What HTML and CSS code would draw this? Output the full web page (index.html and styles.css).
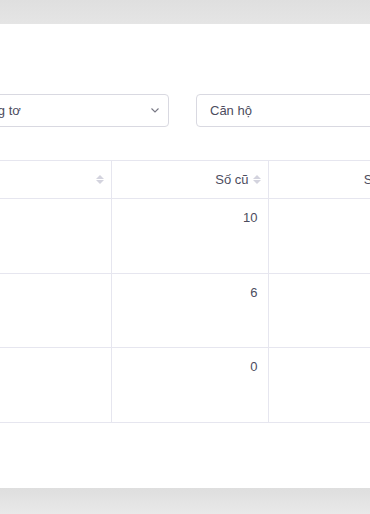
FILE: index.html
```html
<!DOCTYPE html>
<html>
<head>
    <meta charset="UTF-8">
    <title>Chỉ số công tơ</title>
    <link rel="stylesheet" href="styles.css">
</head>
<body>
    <div class="page">
        <div class="card">
            <div class="card-inner">
                <div class="filters">
                    <div class="select">
                        <span>Công tơ</span>
                        <svg class="chevron" width="8" height="5" viewBox="0 0 8 5"><path d="M0.5 0.5 L4 4 L7.5 0.5" fill="none" stroke="#777784" stroke-width="1.1"/></svg>
                    </div>
                    <div class="select">
                        <span>Căn hộ</span>
                        <svg class="chevron" width="8" height="5" viewBox="0 0 8 5"><path d="M0.5 0.5 L4 4 L7.5 0.5" fill="none" stroke="#777784" stroke-width="1.1"/></svg>
                    </div>
                </div>
                <table class="readings">
                    <colgroup>
                        <col class="col-name">
                        <col class="col-num">
                        <col class="col-num">
                    </colgroup>
                    <thead>
                        <tr>
                            <th><span class="th-wrap th-left"><span>Tên</span><i class="sort"></i></span></th>
                            <th><span class="th-wrap">Số cũ <i class="sort"></i></span></th>
                            <th><span class="th-wrap">Số mới <i class="sort"></i></span></th>
                        </tr>
                    </thead>
                    <tbody>
                        <tr><td></td><td class="num">10</td><td class="num"></td></tr>
                        <tr class="short"><td></td><td class="num">6</td><td class="num"></td></tr>
                        <tr><td></td><td class="num">0</td><td class="num"></td></tr>
                    </tbody>
                </table>
            </div>
        </div>
    </div>
</body>
</html>
```

FILE: styles.css
```css
body {
    margin: 0;
    padding: 0;
    font-family: "Liberation Sans", Arial, sans-serif;
    font-size: 13px;
    color: #4c4c5e;
    overflow: hidden;
}

.page {
    padding: 24px 0 26px;
    background: linear-gradient(to bottom, #dfdfdf 0, #e5e5e5 24px, #dedede 488px, #e9e9e9 514px);
}

.card {
    background-color: #fff;
    height: 464px;
    overflow: hidden;
}

.card-inner {
    margin-left: -40px;
    width: 600px;
    padding-top: 70px;
}

/* bộ lọc */
.filters {
    display: flex;
    gap: 27px;
}

.select {
    box-sizing: border-box;
    width: 209px;
    height: 33px;
    border: 1px solid #d9d9e1;
    border-radius: 4px;
    display: flex;
    align-items: center;
    justify-content: space-between;
    padding: 0 9px 0 13px;
}

.chevron {
    display: block;
}

/* bảng */
.readings {
    margin-top: 33px;
    border-collapse: collapse;
    table-layout: fixed;
    width: 465px;
}

.col-name {
    width: 151px;
}

.col-num {
    width: 157px;
}

.readings th,
.readings td {
    border: 1px solid #e6e6ef;
    border-left: none;
    padding: 0;
}

.readings th {
    height: 37px;
    font-weight: normal;
    text-align: right;
    padding-right: 7px;
}

.th-wrap {
    display: inline-flex;
    align-items: center;
    gap: 4px;
}

.th-left {
    display: flex;
    justify-content: space-between;
    padding-left: 10px;
}

.sort {
    display: inline-block;
    width: 8px;
    height: 9px;
    position: relative;
}

.sort::before,
.sort::after {
    content: "";
    position: absolute;
    left: 0;
    border-left: 4px solid transparent;
    border-right: 4px solid transparent;
}

.sort::before {
    top: 0;
    border-bottom: 4px solid #d3d3de;
}

.sort::after {
    bottom: 0;
    border-top: 4px solid #d3d3de;
}

.readings td {
    height: 75px;
    vertical-align: top;
    box-sizing: border-box;
    padding-top: 11px;
    line-height: 16px;
}

.readings .short td {
    height: 74px;
}

.num {
    text-align: right;
    padding-right: 10px !important;
}
```
